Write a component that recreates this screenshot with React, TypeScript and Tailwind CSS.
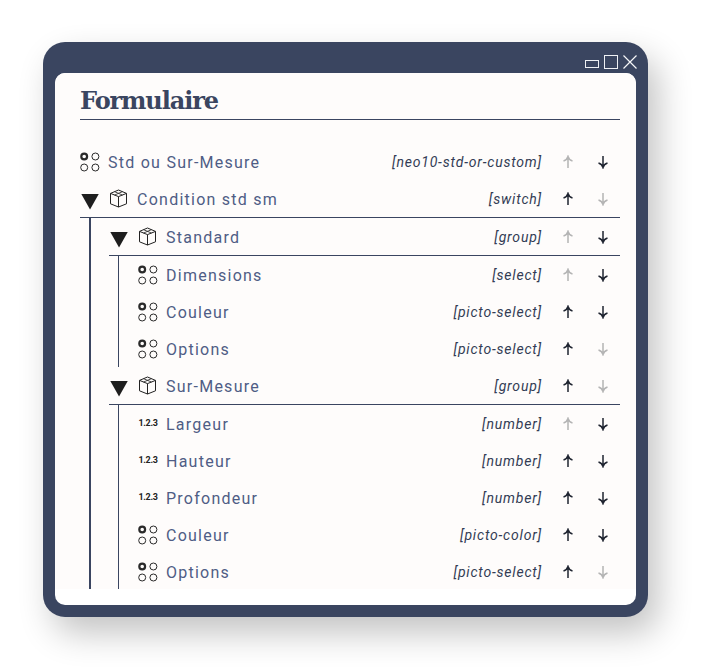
type IconKind = "dots" | "box" | "num";

interface RowProps {
  label: string;
  type: string;
  icon: IconKind;
  up: boolean;
  down: boolean;
  open?: boolean;
  ruled?: boolean;
}

function DotsIcon() {
  return (
    <svg width="20" height="20" viewBox="0 0 20 20" fill="none" stroke="#2a2a2a" strokeWidth="1">
      <circle cx="4.2" cy="4.5" r="2.9" strokeWidth="2.2" />
      <circle cx="15.4" cy="4.5" r="3.5" />
      <circle cx="4.2" cy="15.5" r="3.5" />
      <circle cx="15.4" cy="15.5" r="3.5" />
    </svg>
  );
}

function BoxIcon() {
  return (
    <svg width="19" height="19" viewBox="0 0 19 19" fill="none" stroke="#222" strokeWidth="1" strokeLinejoin="round">
      <path d="M9.5 1 L17.5 4.4 V14.8 L9.5 18 L1.5 14.8 V4.4 Z" />
      <path d="M1.5 4.4 L9.5 7.6 L17.5 4.4 M9.5 7.6 V18" />
      <path d="M5.6 2.7 L13.4 6 M13.4 2.7 L5.6 6" strokeWidth="0.8" />
    </svg>
  );
}

function Arrow({ dir, active }: { dir: "up" | "down"; active: boolean }) {
  return (
    <svg width="12" height="14" viewBox="0 0 12 14" fill="none" stroke={active ? "#1f2430" : "#b4b4b4"} strokeWidth="1.5">
      {dir === "up" ? <path d="M6 13 V2 M1.5 6 Q5 5 6 1.5 Q7 5 10.5 6" /> : <path d="M6 1 V12 M1.5 8 Q5 9 6 12.5 Q7 9 10.5 8" />}
    </svg>
  );
}

function Row({ label, type, icon, up, down, open, ruled }: RowProps) {
  return (
    <div className={`flex items-center pt-[2px] ${ruled ? "h-[38px] border-b border-[#3a4560]" : "h-[37px]"}`}>
      {open && <div className="w-[18px] h-[16px] mt-[4px] mr-[9px] ml-px bg-[#1e1e1e] [clip-path:polygon(0_0,100%_0,50%_100%)]" />}
      <div className="w-[20px] flex justify-center -translate-y-px">
        {icon === "dots" && <DotsIcon />}
        {icon === "box" && <BoxIcon />}
        {icon === "num" && <span className="text-[9px] font-bold text-[#222] tracking-[-0.3px]">1.2.3</span>}
      </div>
      <span className={`${open ? "ml-[9px]" : "ml-[8px]"} text-[16px] text-[#4f5d85] tracking-[1.25px]`}>{label}</span>
      <span className="ml-auto text-[14px] italic text-[#333c55] tracking-[0.8px]">[{type}]</span>
      <div className="w-[47px] ml-[20px] mr-[11px] flex justify-between -translate-y-px">
        <Arrow dir="up" active={up} />
        <Arrow dir="down" active={down} />
      </div>
    </div>
  );
}

export default function App() {
  return (
    <div className="w-[703px] h-[671px] bg-white pt-[42px] pl-[43px] font-['Roboto',sans-serif]">
      <div className="w-[605px] h-[575px] rounded-[22px] bg-[#3a4560] px-[12px] pb-[12px] shadow-[10px_16px_34px_rgba(0,0,0,0.24)]">
        <div className="h-[31px] flex justify-end items-start pt-[13px] gap-[5px] -mr-[1px]">
          <div className="w-[14px] h-[8px] mt-[5px] border border-[#eef0f4]" />
          <div className="w-[14px] h-[14px] border border-[#eef0f4]" />
          <svg width="14" height="14" viewBox="0 0 14 14" stroke="#f5f6f8" strokeWidth="1.2">
            <path d="M0.5 0.5 L13.5 13.5 M13.5 0.5 L0.5 13.5" />
          </svg>
        </div>
        <div className="h-[532px] rounded-[10px] bg-white">
          <div className="h-[516px] rounded-t-[10px] bg-[#fefcfb] pl-[25px] pr-[16px]">
            <div className="h-[47px] pt-[11px] border-b border-[#3a4560] font-['DejaVu_Serif',serif] text-[24px] leading-[34px] font-bold text-[#3a4560] tracking-[-1.1px]">
              Formulaire
            </div>
            <div className="pt-[23px]">
              <Row label="Std ou Sur-Mesure" type="neo10-std-or-custom" icon="dots" up={false} down />
              <Row label="Condition std sm" type="switch" icon="box" up down={false} open ruled />
              <div className="ml-[9px] border-l-2 border-[#3a4560] pl-[18px]">
                <Row label="Standard" type="group" icon="box" up={false} down open ruled />
                <div className="ml-[9px] border-l border-[#3a4560] pl-[19px]">
                  <Row label="Dimensions" type="select" icon="dots" up={false} down />
                  <Row label="Couleur" type="picto-select" icon="dots" up down />
                  <Row label="Options" type="picto-select" icon="dots" up down={false} />
                </div>
                <Row label="Sur-Mesure" type="group" icon="box" up down={false} open ruled />
                <div className="h-[184px] ml-[9px] border-l border-[#3a4560] pl-[19px]">
                  <Row label="Largeur" type="number" icon="num" up={false} down />
                  <Row label="Hauteur" type="number" icon="num" up down />
                  <Row label="Profondeur" type="number" icon="num" up down />
                  <Row label="Couleur" type="picto-color" icon="dots" up down />
                  <Row label="Options" type="picto-select" icon="dots" up down={false} />
                </div>
              </div>
            </div>
          </div>
        </div>
      </div>
    </div>
  );
}
